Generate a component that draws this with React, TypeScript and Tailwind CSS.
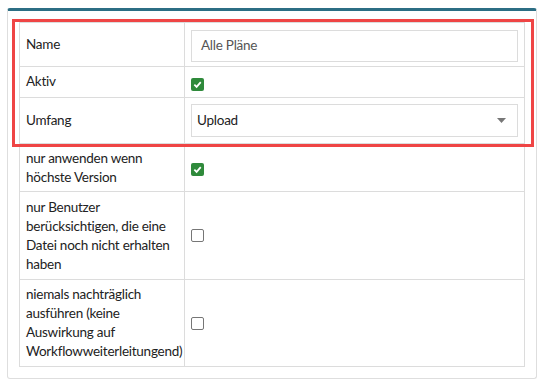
import React from "react";

function Check({ checked }: { checked: boolean }) {
  if (checked) {
    return (
      <span className="flex h-[13px] w-[13px] items-center justify-center rounded-[2px] bg-[#2f8a3b]">
        <svg width="9" height="9" viewBox="0 0 10 10">
          <path d="M1.5 5.2 L4 7.6 L8.6 2.4" fill="none" stroke="white" strokeWidth="2" />
        </svg>
      </span>
    );
  }
  return <span className="block h-[13px] w-[13px] rounded-[2px] border border-[#767676] bg-white" />;
}

const labelCell = "border-r border-[#dcdcdc] px-[6px] text-[13.5px] leading-[19px] tracking-[-0.25px] text-[#222]";

export default function App() {
  return (
    <div className="relative h-[385px] w-[544px] bg-white" style={{ fontFamily: "Lato, 'Noto Sans', sans-serif" }}>
      <div className="absolute left-[7px] top-[8px] h-[371px] w-[530px] rounded-[3px] border border-t-[3px] border-[#dedede] border-t-[#2c6e84] px-[11px] pt-[11px]">
        <div className="flex flex-col border border-[#dcdcdc]">
          <div className="flex h-[44px] border-b border-[#dcdcdc]">
            <div className={`${labelCell} flex w-[165px] items-center`}>Name</div>
            <div className="flex flex-1 items-center px-[6px] pt-[2px]">
              <div className="flex h-[32px] w-full items-center border border-[#dcdcdc] px-[9px] text-[13.5px] tracking-[-0.25px] text-[#555]">Alle Pläne</div>
            </div>
          </div>
          <div className="flex h-[31px] border-b border-[#dcdcdc]">
            <div className={`${labelCell} flex w-[165px] items-center pb-[1px]`}>Aktiv</div>
            <div className="flex flex-1 items-center px-[6px] pt-[4px]">
              <Check checked />
            </div>
          </div>
          <div className="flex h-[46px] border-b border-[#dcdcdc]">
            <div className={`${labelCell} flex w-[165px] items-center`}>Umfang</div>
            <div className="flex flex-1 items-center px-[6px]">
              <div className="flex h-[33px] w-full items-center justify-between border border-[#dcdcdc] pl-[5px] pr-[11px] text-[13.5px] tracking-[-0.25px] text-[#222]">
                <span>Upload</span>
                <svg width="9" height="5" viewBox="0 0 9 5">
                  <path d="M0 0 H9 L4.5 5 Z" fill="#777" />
                </svg>
              </div>
            </div>
          </div>
          <div className="flex h-[48px] border-b border-[#dcdcdc]">
            <div className={`${labelCell} w-[165px] py-[5px]`}>nur anwenden wenn höchste Version</div>
            <div className="flex flex-1 items-center px-[6px] pt-[3px]">
              <Check checked />
            </div>
          </div>
          <div className="flex h-[88px] border-b border-[#dcdcdc]">
            <div className={`${labelCell} w-[165px] py-[6px]`}>nur Benutzer berücksichtigen, die eine Datei noch nicht erhalten haben</div>
            <div className="flex flex-1 items-center px-[6px]">
              <Check checked={false} />
            </div>
          </div>
          <div className="flex h-[86px]">
            <div className={`${labelCell} w-[165px] py-[5px]`}>niemals nachträglich ausführen (keine Auswirkung auf Workflowweiterleitungend)</div>
            <div className="flex flex-1 items-center px-[6px]">
              <Check checked={false} />
            </div>
          </div>
        </div>
      </div>
      <div className="absolute left-[12px] top-[19px] h-[128px] w-[522px] border-[3px] border-[#ef4545]" />
    </div>
  );
}
